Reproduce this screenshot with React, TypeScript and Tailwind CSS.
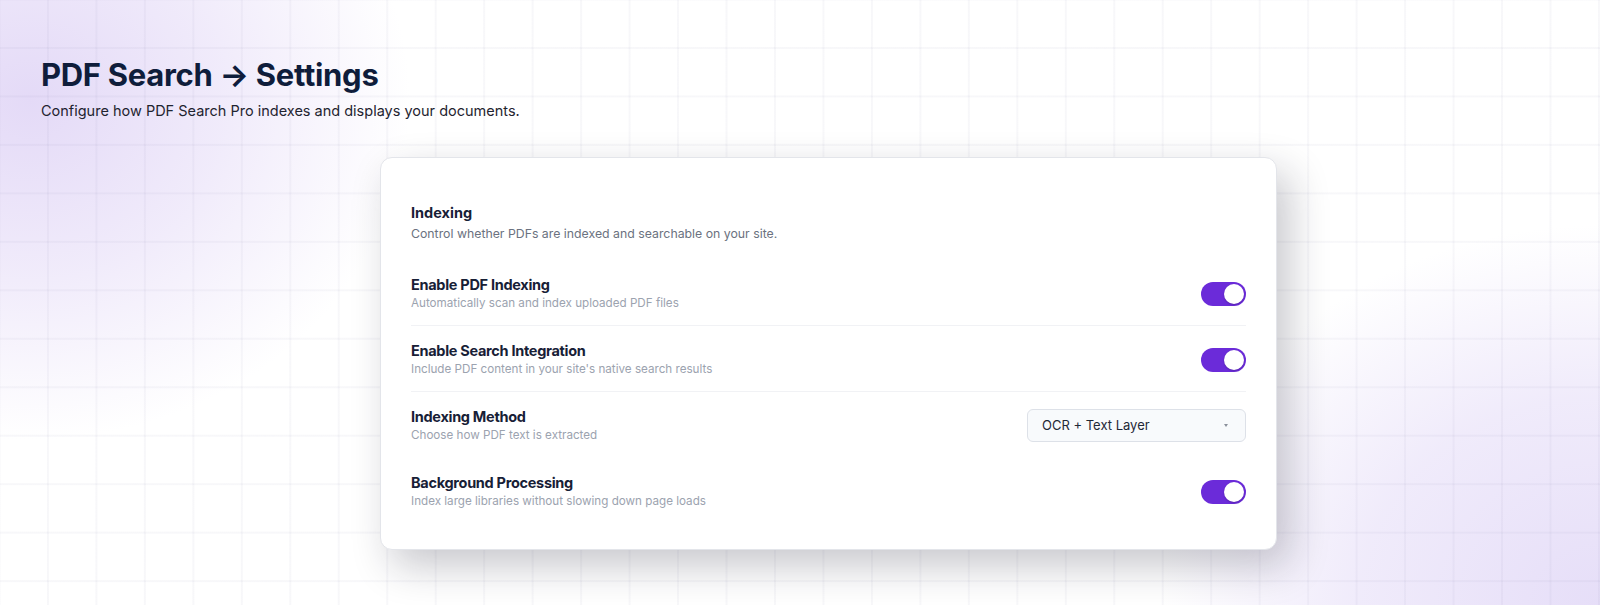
import React from "react";

const rows = [
  {
    title: "Enable PDF Indexing",
    desc: "Automatically scan and index uploaded PDF files",
    type: "toggle",
  },
  {
    title: "Enable Search Integration",
    desc: "Include PDF content in your site's native search results",
    type: "toggle",
  },
  {
    title: "Indexing Method",
    desc: "Choose how PDF text is extracted",
    type: "select",
  },
  {
    title: "Background Processing",
    desc: "Index large libraries without slowing down page loads",
    type: "toggle",
  },
];

const Toggle = () => (
  <button className="relative w-[45px] h-[24px] rounded-full bg-[#6b2bd9] shrink-0">
    <span className="absolute right-[2px] top-[2px] w-[20px] h-[20px] rounded-full bg-white shadow-[0_1px_2px_rgba(0,0,0,0.2)]" />
  </button>
);

const Select = () => (
  <div className="w-[219px] h-[33px] rounded-[6px] border border-[#dde1e8] bg-[#f8fafc] flex items-center justify-between pl-[14px] pr-[17px] text-[13px] text-[#1f2937]">
    <span>OCR + Text Layer</span>
    <svg width="4" height="3" viewBox="0 0 4 3">
      <path d="M0 0h4L2 3z" fill="#8a909b" />
    </svg>
  </div>
);

export default function App() {
  return (
    <div
      className="h-[605px] w-full overflow-hidden font-['Inter',sans-serif] pl-[41px] pt-[56px] bg-white bg-[linear-gradient(to_right,rgba(80,80,130,0.045)_2px,transparent_2px),linear-gradient(to_bottom,rgba(80,80,130,0.045)_2px,transparent_2px),radial-gradient(ellipse_380px_340px_at_30px_100px,rgba(228,218,247,1),rgba(228,218,247,0.55)_50%,rgba(255,255,255,0)_100%),radial-gradient(ellipse_440px_380px_at_1600px_605px,rgba(230,222,248,1),rgba(230,222,248,0.6)_55%,rgba(255,255,255,0)_100%)] bg-[size:48.48px_48.48px,48.48px_48.48px,100%_100%,100%_100%] bg-[position:-1.5px_-1.5px,-1.5px_-1.5px,0_0,0_0]"
    >
      <h1 className="text-[31px] leading-[38px] font-bold text-[#0f1d3b] tracking-[-0.3px]">
        PDF Search → Settings
      </h1>
      <p className="mt-[6px] text-[14.5px] leading-[22px] text-[#1f2430]">
        Configure how PDF Search Pro indexes and displays your documents.
      </p>

      <div className="mt-[35px] ml-[339px] w-[897px] rounded-[12px] border border-[#e3e5ea] bg-white px-[30px] pt-[45px] pb-[26px] shadow-[12px_16px_40px_rgba(20,20,40,0.24)]">
        <h2 className="text-[14.5px] leading-[20px] font-bold text-[#172036]">
          Indexing
        </h2>
        <p className="mt-[2px] text-[12.3px] leading-[18px] text-[#6b7280]">
          Control whether PDFs are indexed and searchable on your site.
        </p>

        <div className="mt-[17px]">
          {rows.map((row, i) => (
            <div
              key={row.title}
              className={`flex items-center justify-between pt-[16px] pb-[14px] ${
                i < 2 ? "border-b border-[#f1f2f5]" : i === 2 ? "border-b border-transparent" : ""
              }`}
            >
              <div>
                <div className="text-[14.5px] leading-[18px] font-bold tracking-[-0.3px] text-[#172036]">
                  {row.title}
                </div>
                <div className="mt-[2px] text-[11.65px] leading-[15px] text-[#9ca3af]">
                  {row.desc}
                </div>
              </div>
              {row.type === "toggle" ? <Toggle /> : <Select />}
            </div>
          ))}
        </div>
      </div>
    </div>
  );
}
